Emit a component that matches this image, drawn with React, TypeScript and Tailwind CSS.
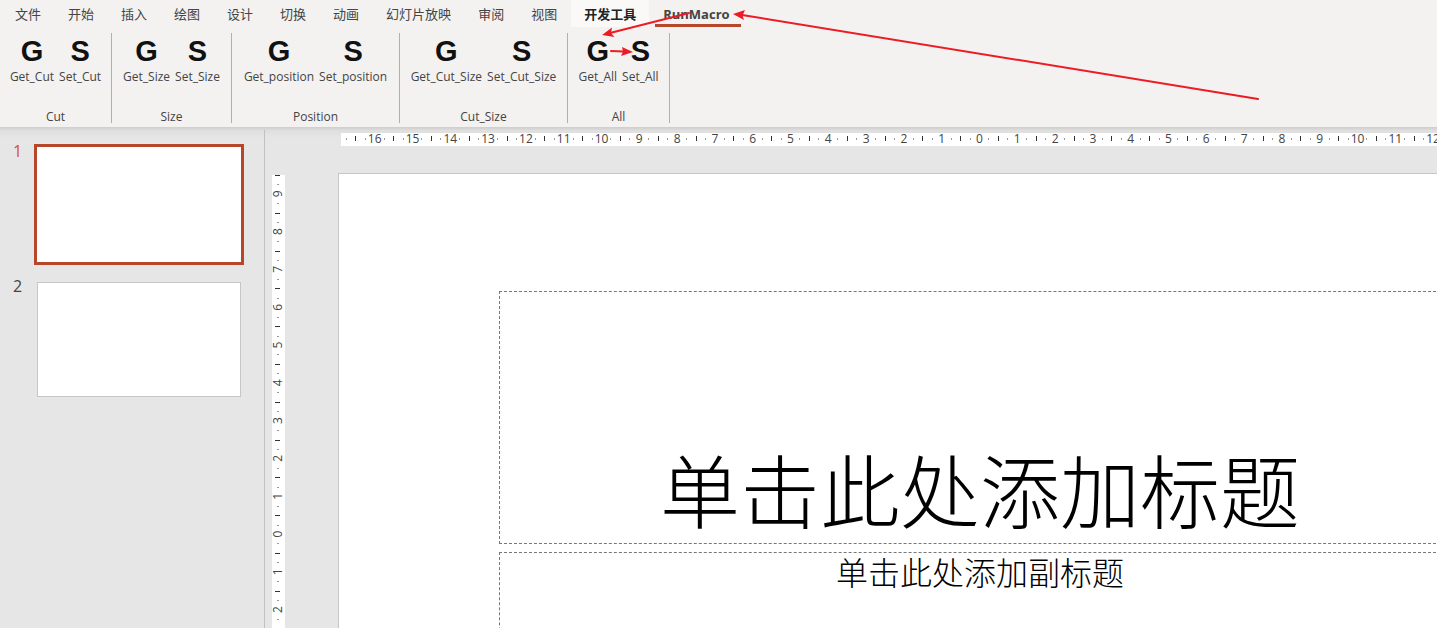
import React from "react";

const tabs = ["文件", "开始", "插入", "绘图", "设计", "切换", "动画", "幻灯片放映", "审阅", "视图"];

const groups = [
  { name: "Cut", width: "w-[112px]", get: "Get_Cut", set: "Set_Cut" },
  { name: "Size", width: "w-[120px]", get: "Get_Size", set: "Set_Size" },
  { name: "Position", width: "w-[168px]", get: "Get_position", set: "Set_position" },
  { name: "Cut_Size", width: "w-[168px]", get: "Get_Cut_Size", set: "Set_Cut_Size" },
  { name: "All", width: "w-[102px]", get: "Get_All", set: "Set_All" },
];

const CM = 37.8;

function MacroButton({ glyph, label }: { glyph: string; label: string }) {
  return (
    <button type="button" className="flex flex-col items-center">
      <span aria-hidden="true" className="font-['Liberation_Sans',sans-serif] text-[29px] leading-9 font-bold text-[#111]">
        {glyph}
      </span>
      <span className="text-xs leading-4">{label}</span>
    </button>
  );
}

function range(from: number, to: number) {
  return Array.from({ length: to - from + 1 }, (_, i) => from + i);
}

function HorizontalRuler() {
  const zero = 638;
  return (
    <svg width="1277" height="13" className="shrink-0 overflow-visible bg-white text-xs" aria-label="水平标尺">
      {range(-16, 12).map((n) => {
        const x = zero + n * CM;
        return (
          <g key={n}>
            <text x={x + 0.5} y="10" textAnchor="middle" fill="#444">
              {Math.abs(n)}
            </text>
            <rect x={Math.round(x - CM / 2)} y="3" width="1" height="5" fill="#333" />
            <rect x={Math.round(x - (CM * 3) / 4)} y="5" width="1" height="2" fill="#999" />
            <rect x={Math.round(x - CM / 4)} y="5" width="1" height="2" fill="#999" />
          </g>
        );
      })}
    </svg>
  );
}

function VerticalRuler() {
  const zero = 359;
  return (
    <svg width="13" height="718" className="shrink-0 overflow-visible bg-white text-xs" aria-label="垂直标尺">
      {range(-9, 2).map((n) => {
        const y = zero + n * CM;
        return (
          <g key={n}>
            <text transform={`translate(10 ${y}) rotate(-90)`} textAnchor="middle" fill="#444">
              {Math.abs(n)}
            </text>
            <rect x="3" y={Math.round(y - CM / 2)} width="5" height="1" fill="#333" />
            <rect x="5" y={Math.round(y - CM / 4)} width="2" height="1" fill="#999" />
            <rect x="5" y={Math.round(y + CM / 4)} width="2" height="1" fill="#999" />
          </g>
        );
      })}
    </svg>
  );
}

function Arrows() {
  return (
    <svg className="pointer-events-none absolute top-0 left-0" width="1280" height="110" aria-hidden="true">
      <g stroke="#ed1c24" strokeWidth="2" strokeLinecap="round">
        <path d="M1258 99 L742 15" />
        <path d="M689 13 L610 33" />
        <path d="M611 51 L624 51.500" />
      </g>
      <g fill="#ed1c24">
        <path d="M733 14 L745 10 L742.500 15.500 L744 20 Z" />
        <path d="M602 35 L612 27.500 L611 33 L614.500 37 Z" />
        <path d="M633 52 L621 56 L623 51.500 L622 47 Z" />
      </g>
    </svg>
  );
}

export default function App() {
  return (
    <div className="relative flex h-screen flex-col overflow-hidden bg-[#e6e6e6] font-['Open_Sans','Noto_Sans_CJK_SC',sans-serif] text-[#444]">
      <header className="shrink-0 bg-[#f3f2f1]">
        <nav className="flex h-[27px] gap-px pl-0.5 text-[13px] leading-[28px] whitespace-nowrap">
          {tabs.map((tab) => (
            <button key={tab} type="button" className="px-[13px]">
              {tab}
            </button>
          ))}
          <button type="button" className="bg-[#faf9f8] px-[13px] font-bold text-[#222]">
            开发工具
          </button>
          <button type="button" className="relative px-[13px] font-bold">
            RunMacro
            <span className="absolute right-0.5 bottom-0 left-[5px] h-[3px] bg-[#b7472a]" />
          </button>
        </nav>
        <div className="flex h-[100px] pt-1.5">
          {groups.map((group) => (
            <section
              key={group.name}
              aria-label={group.name}
              className={`flex h-[90px] flex-col items-center justify-between border-r border-[#b0b0b0] ${group.width}`}
            >
              <div className="flex gap-[5px]">
                <MacroButton glyph="G" label={group.get} />
                <MacroButton glyph="S" label={group.set} />
              </div>
              <span className="text-xs leading-3">{group.name}</span>
            </section>
          ))}
        </div>
      </header>
      <div className="h-[3px] shrink-0 bg-linear-to-b from-[#cfcecc] to-[#dbdbdb]" />
      <div className="flex min-h-0 flex-1 bg-linear-to-b from-[#dedede] to-[#e6e6e6] to-[8px]">
        <aside className="flex w-[265px] shrink-0 flex-col gap-[17px] border-r border-[#c0c0c0] pt-3.5">
          <div className="flex">
            <span className="w-[34px] pl-[13px] text-base leading-3.5 text-[#d35230]">1</span>
            <button type="button" aria-label="幻灯片 1" className="h-[121px] w-[210px] border-3 border-[#b7472a] bg-white" />
          </div>
          <div className="flex">
            <span className="w-[37px] pl-[13px] text-base leading-2">2</span>
            <button type="button" aria-label="幻灯片 2" className="h-[115px] w-[204px] border border-[#c6c6c6] bg-white" />
          </div>
        </aside>
        <main className="flex min-w-0 flex-1 flex-col overflow-hidden pt-[3px] pl-[7px]">
          <div className="flex shrink-0 pl-[69px]">
            <HorizontalRuler />
          </div>
          <div className="flex min-h-0 flex-1 items-start pt-[27px]">
            <div className="mt-0.5 flex shrink-0">
              <VerticalRuler />
            </div>
            <div className="ml-[53px] flex h-[722px] w-[1284px] shrink-0 flex-col items-center border border-[#c6c6c6] bg-white pt-[117px] font-['Noto_Sans_CJK_SC',sans-serif] text-black">
              <h1 className="flex h-[253px] w-[962px] shrink-0 items-end justify-center border border-dashed border-[#777] pb-2 text-[80px] leading-[96px] font-light">
                单击此处添加标题
              </h1>
              <p className="mt-2 h-[174px] w-[962px] shrink-0 border border-dashed border-[#777] text-center text-[32px] leading-9 font-light">
                单击此处添加副标题
              </p>
            </div>
          </div>
        </main>
      </div>
      <Arrows />
    </div>
  );
}
